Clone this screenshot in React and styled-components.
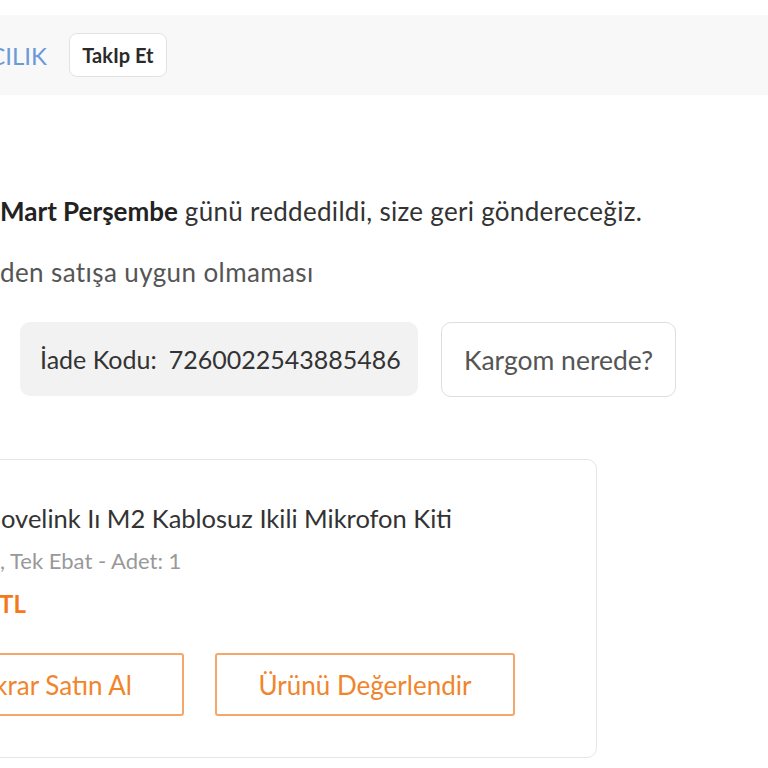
import React from "react";
import styled, { createGlobalStyle } from "styled-components";

const Global = createGlobalStyle`
  html, body { margin: 0; padding: 0; background: #fff; overflow: hidden; }
  body { font-family: "Source Sans Pro", Lato, "Liberation Sans", sans-serif; color: #333; }
  * { box-sizing: border-box; }
`;

const Page = styled.div`
  width: 768px;
  height: 768px;
  overflow: hidden;
  padding-top: 15px;
`;

const Header = styled.div`
  height: 80px;
  background: #f8f8f8;
  display: flex;
  align-items: center;
  gap: 22px;
`;

const SellerName = styled.span`
  font-size: 24px;
  color: #6c9ad6;
  white-space: nowrap;
  margin-left: -59px;
`;

const FollowButton = styled.button`
  height: 44px;
  width: 98px;
  background: #fff;
  border: 1px solid #e2e2e2;
  border-radius: 8px;
  font-family: inherit;
  font-size: 20px;
  font-weight: 700;
  color: #2a2a2a;
  padding: 0;
`;

const Message = styled.p`
  margin: 101px 0 0 0;
  font-size: 26px;
  line-height: 30px;
  color: #333;
  letter-spacing: 0.3px;
  white-space: nowrap;
  b { font-weight: 700; color: #222; letter-spacing: 0; }
`;

const Reason = styled.p`
  margin: 31px 0 0 0;
  font-size: 26px;
  line-height: 30px;
  letter-spacing: 0.4px;
  color: #555;
  white-space: nowrap;
`;

const CodeRow = styled.div`
  display: flex;
  gap: 23px;
  margin: 35px 0 0 20px;
`;

const CodeBox = styled.div`
  width: 398px;
  height: 74px;
  background: #f2f2f2;
  border-radius: 10px;
  display: flex;
  align-items: center;
  padding-left: 20px;
  font-size: 25px;
  color: #333;
  gap: 12px;
`;

const CargoButton = styled.button`
  width: 235px;
  height: 75px;
  background: #fff;
  border: 1px solid #dedede;
  border-radius: 10px;
  font-family: inherit;
  font-size: 26.5px;
  color: #555;
  padding: 0;
`;

const Card = styled.div`
  margin: 62px 0 0 -40px;
  width: 637px;
  height: 299px;
  border: 1px solid #e6e6e6;
  border-radius: 10px;
  padding: 43px 0 0 0;
  display: flex;
  flex-direction: column;
`;

const Title = styled.div`
  font-size: 25.5px;
  line-height: 30px;
  color: #333;
  white-space: nowrap;
  margin-left: 40px;
`;

const Variant = styled.div`
  font-size: 22px;
  line-height: 26px;
  color: #999;
  margin-top: 15px;
  margin-left: 39px;
  white-space: nowrap;
`;

const Price = styled.div`
  font-size: 24px;
  line-height: 28px;
  color: #f27a1a;
  font-weight: 700;
  margin-top: 16px;
  margin-left: 38px;
`;

const Actions = styled.div`
  display: flex;
  justify-content: flex-end;
  gap: 31px;
  margin-top: 35px;
  padding-right: 81px;
`;

const OutlineButton = styled.button`
  height: 63px;
  width: ${(p) => (p.$w ? `${p.$w}px` : "auto")};
  padding: 0 ${(p) => (p.$w ? 0 : 50)}px;
  background: #fff;
  border: 2px solid #f4a769;
  border-radius: 3px;
  font-family: inherit;
  font-size: 26px;
  color: #f0852c;
  white-space: nowrap;
  flex-shrink: 0;
`;

export default function App() {
  return (
    <>
      <Global />
      <Page>
        <Header>
          <SellerName>SATICILIK</SellerName>
          <FollowButton>TakIp Et</FollowButton>
        </Header>
        <Message>
          <b>Mart Perşembe</b> günü reddedildi, size geri göndereceğiz.
        </Message>
        <Reason>den satışa uygun olmaması</Reason>
        <CodeRow>
          <CodeBox>
            <span>İade Kodu:</span>
            <span>7260022543885486</span>
          </CodeBox>
          <CargoButton>Kargom nerede?</CargoButton>
        </CodeRow>
        <Card>
          <Title>ovelink Iı M2 Kablosuz Ikili Mikrofon Kiti</Title>
          <Variant>, Tek Ebat - Adet: 1</Variant>
          <Price>TL</Price>
          <Actions>
            <OutlineButton>Tekrar Satın Al</OutlineButton>
            <OutlineButton $w={300}>Ürünü Değerlendir</OutlineButton>
          </Actions>
        </Card>
      </Page>
    </>
  );
}
